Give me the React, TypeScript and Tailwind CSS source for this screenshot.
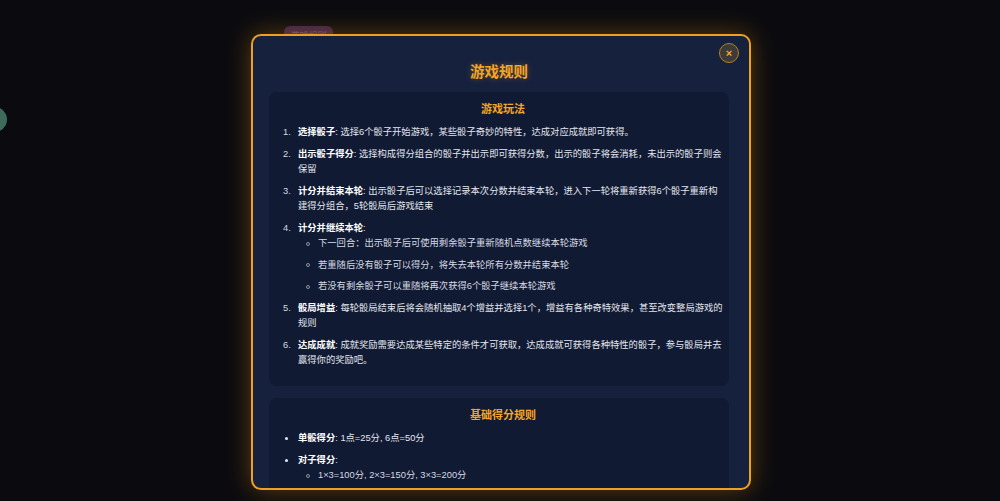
const font = { fontFamily: '"Liberation Sans", "Noto Sans CJK SC", sans-serif' };

type Rule = { title: string; desc?: string; sub?: string[] };

const rules: Rule[] = [
  { title: '选择骰子', desc: '选择6个骰子开始游戏，某些骰子奇妙的特性，达成对应成就即可获得。' },
  { title: '出示骰子得分', desc: '选择构成得分组合的骰子并出示即可获得分数，出示的骰子将会消耗，未出示的骰子则会保留' },
  { title: '计分并结束本轮', desc: '出示骰子后可以选择记录本次分数并结束本轮，进入下一轮将重新获得6个骰子重新构建得分组合，5轮骰局后游戏结束' },
  {
    title: '计分并继续本轮',
    sub: [
      '下一回合：出示骰子后可使用剩余骰子重新随机点数继续本轮游戏',
      '若重随后没有骰子可以得分，将失去本轮所有分数并结束本轮',
      '若没有剩余骰子可以重随将再次获得6个骰子继续本轮游戏',
    ],
  },
  { title: '骰局增益', desc: '每轮骰局结束后将会随机抽取4个增益并选择1个，增益有各种奇特效果，甚至改变整局游戏的规则' },
  { title: '达成成就', desc: '成就奖励需要达成某些特定的条件才可获取，达成成就可获得各种特性的骰子，参与骰局并去赢得你的奖励吧。' },
];

const scoring: Rule[] = [
  { title: '单骰得分', desc: '1点=25分, 6点=50分' },
  { title: '对子得分', sub: ['1×3=100分, 2×3=150分, 3×3=200分'] },
];

function SubList({ items }: { items: string[] }) {
  return (
    <ul>
      {items.map((s) => (
        <li key={s} className="mb-[6.5px] flex items-center text-[#d5d9e2] last:mb-0">
          <span className="ml-[8px] mr-[8px] h-[4px] w-[4px] shrink-0 rounded-full border border-[#8b93a7]" />
          <span>{s}</span>
        </li>
      ))}
    </ul>
  );
}

function Card({ title, children }: { title: string; children: React.ReactNode }) {
  return (
    <section className="rounded-lg bg-[#111a33] pb-[11px] pl-[14px] pr-[6px] pt-[10px]">
      <h3 className="mb-[9px] text-center text-[11px] font-bold leading-[14px] text-[#f5a524]">{title}</h3>
      {children}
    </section>
  );
}

function Entry({ r, marker }: { r: Rule; marker: React.ReactNode }) {
  return (
    <li className="mb-[7px] flex">
      {marker}
      <div className="min-w-0 flex-1">
        <div>
          <strong className="font-bold text-white">{r.title}</strong>:{r.desc ? ' ' + r.desc : ''}
        </div>
        {r.sub && <SubList items={r.sub} />}
      </div>
    </li>
  );
}

export default function App() {
  return (
    <div className="relative h-[501px] w-[1000px] overflow-hidden bg-[#0b0b0f]" style={font}>
      {/* page underneath the overlay */}
      <div className="absolute left-[284px] top-[26px] h-[20px] w-[49px] rounded-md bg-[#3a1f4b] text-center text-[9px] leading-[20px] text-[#6b4a78]">
        游戏规则
      </div>
      <div className="absolute left-[-18px] top-[107px] h-[25px] w-[25px] rounded-full bg-[#3d6b5b]" />

      {/* modal */}
      <div className="absolute inset-0 flex justify-center pl-[2px] pt-[34px]">
        <div className="relative h-[456px] w-[500px] overflow-hidden rounded-[10px] border-2 border-[#f0a020] bg-[#16213e] pl-4 pr-5 pt-[26px] shadow-[0_0_24px_rgba(245,158,11,0.35)]">
          <button className="absolute right-[10px] top-[7px] flex h-[20px] w-[20px] items-center justify-center rounded-full border border-[#b8801f] bg-[#3d3a3a] text-[11px] font-bold leading-none text-[#f5a524]">
            ×
          </button>
          <h2 className="mb-[10px] text-center text-[14.5px] font-bold leading-[20px] text-[#f5a524] [text-shadow:0_0_6px_rgba(245,165,36,0.35)]">
            游戏规则
          </h2>

          <div className="flex flex-col gap-[12px] text-[9.3px] leading-[15px] text-[#e2e6ee]">
            <Card title="游戏玩法">
              <ol>
                {rules.map((r, i) => (
                  <Entry key={r.title} r={r} marker={<span className="w-[15px] shrink-0 text-[#d5d9e2]">{i + 1}.</span>} />
                ))}
              </ol>
            </Card>

            <Card title="基础得分规则">
              <ul className="pb-[80px]">
                {scoring.map((r) => (
                  <Entry
                    key={r.title}
                    r={r}
                    marker={
                      <span className="flex h-[15px] w-[15px] shrink-0 items-center">
                        <span className="ml-[2px] h-[3px] w-[3px] rounded-full bg-[#e2e6ee]" />
                      </span>
                    }
                  />
                ))}
              </ul>
            </Card>
          </div>
        </div>
      </div>
    </div>
  );
}
